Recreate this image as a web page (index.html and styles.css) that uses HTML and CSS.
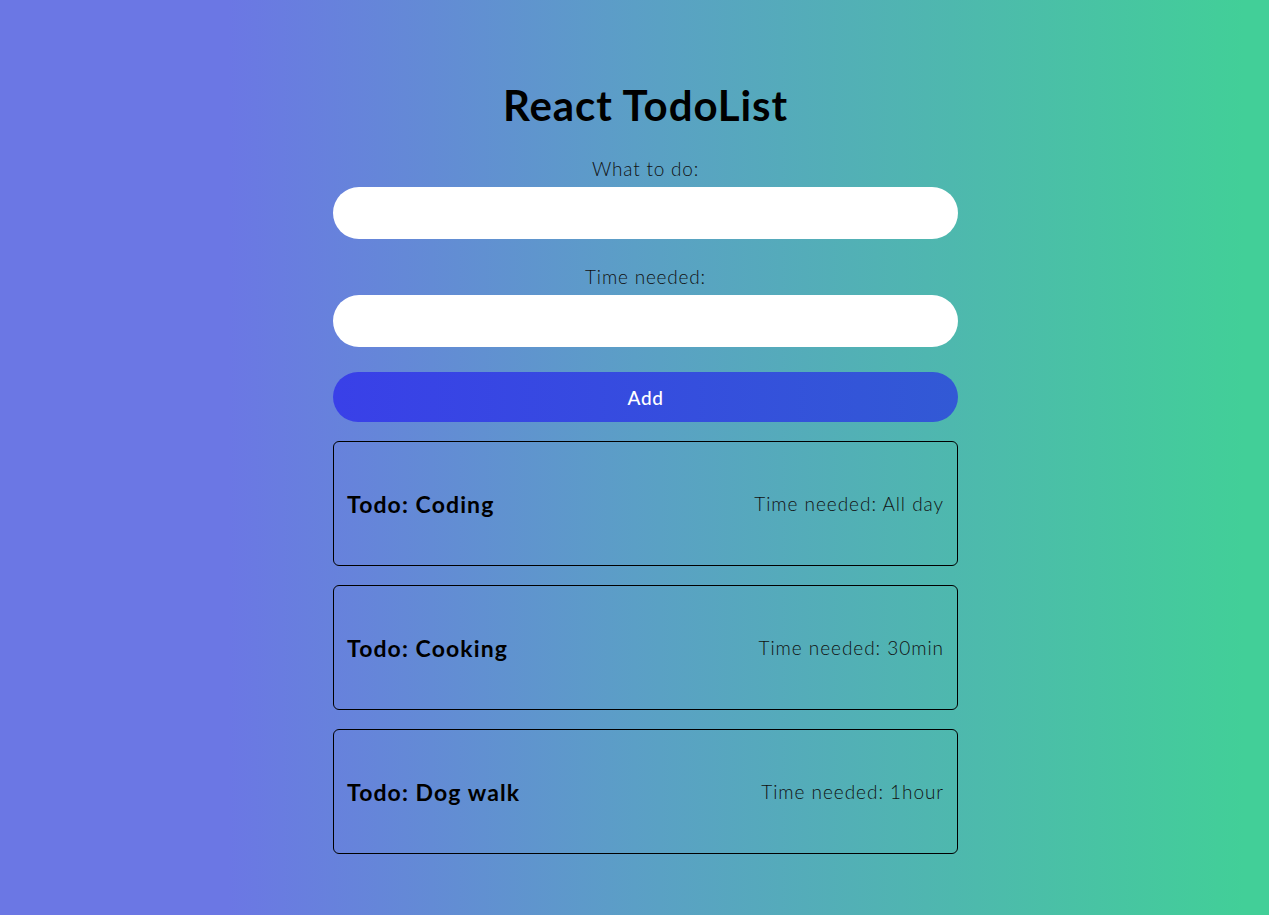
FILE: index.html
```html
<!DOCTYPE html>
<html lang="en">
<head>
<meta charset="utf-8">
<title>React TodoList</title>
<link rel="stylesheet" href="styles.css">
</head>
<body>
<main class="page">
  <div class="app">
    <h1 class="title">React TodoList</h1>
    <form class="form">
      <label class="label" for="what">What to do:</label>
      <input class="input" id="what" type="text">
      <label class="label" for="time">Time needed:</label>
      <input class="input input-last" id="time" type="text">
      <button class="add" type="button">Add</button>
    </form>
    <ul class="list">
      <li class="todo"><span class="todo-name">Todo: Coding</span><span class="todo-time">Time needed: All day</span></li>
      <li class="todo"><span class="todo-name">Todo: Cooking</span><span class="todo-time">Time needed: 30min</span></li>
      <li class="todo"><span class="todo-name">Todo: Dog walk</span><span class="todo-time">Time needed: 1hour</span></li>
    </ul>
  </div>
</main>
</body>
</html>
```
FILE: styles.css
```css
html, body {
  margin: 0;
  padding: 0;
  height: 100%;
}
body {
  background: linear-gradient(90deg, #6b77e4 18%, #5b9fc6 50%, #42cf98 98%);
  font-family: "Lato", "Noto Sans", sans-serif;
  color: #000;
}
.page {
  display: flex;
  justify-content: center;
  padding-left: 22px;
  min-height: 100%;
  box-sizing: border-box;
}
.app {
  width: 625px;
  display: flex;
  flex-direction: column;
  align-items: stretch;
}
.title {
  margin: 80px 0 0;
  text-align: center;
  font-size: 42px;
  font-weight: 700;
  line-height: 50px;
  letter-spacing: 0.9px;
}
.form {
  display: flex;
  flex-direction: column;
  margin-top: 27px;
}
.label {
  text-align: center;
  font-size: 19px;
  font-weight: 300;
  line-height: 24px;
  letter-spacing: 0.8px;
  margin-bottom: 6px;
  color: #111;
}
.input {
  height: 52px;
  border: none;
  border-radius: 26px;
  background: #fff;
  padding: 0 20px;
  font: inherit;
  outline: none;
  margin-bottom: 26px;
}
.input-last { margin-bottom: 25px; }
.add {
  height: 50px;
  border: none;
  border-radius: 25px;
  background: linear-gradient(90deg, #3940e8, #3259d5);
  color: #fff;
  font-family: inherit;
  font-size: 19px;
  font-weight: 500;
  letter-spacing: 0.6px;
}
.list {
  list-style: none;
  margin: 19px 0 0;
  padding: 0;
  display: flex;
  flex-direction: column;
  gap: 19px;
}
.todo {
  height: 125px;
  box-sizing: border-box;
  border: 1px solid #000;
  border-radius: 6px;
  display: flex;
  align-items: center;
  justify-content: space-between;
  padding: 0 13px;
}
.todo-name {
  font-size: 23px;
  font-weight: 700;
  letter-spacing: 1.1px;
}
.todo-time {
  font-size: 19px;
  font-weight: 300;
  letter-spacing: 0.95px;
  color: #111;
}
```
